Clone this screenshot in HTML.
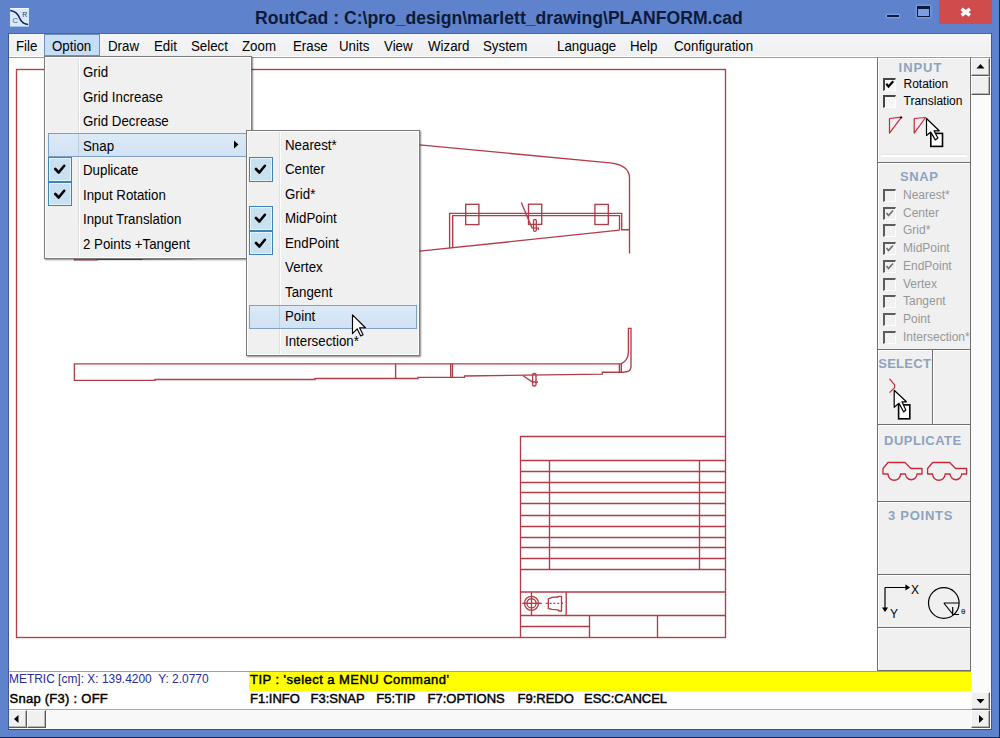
<!DOCTYPE html>
<html><head><meta charset="utf-8">
<style>
*{margin:0;padding:0;box-sizing:border-box}
html,body{width:1000px;height:738px;overflow:hidden;background:#5e82cc;font-family:"Liberation Sans",sans-serif}
.a{position:absolute}
.t{position:absolute;white-space:pre;line-height:1}
#title{left:0;top:0;width:1000px;height:34px;background:#5e82cc}
#menubar{left:8px;top:33px;width:983px;height:25px;background:linear-gradient(#f4f5f8,#f0f0f0);border-top:1px solid #4b679c;border-bottom:1px solid #9c9c9c;box-shadow:inset 0 -1px 0 #fff}
.mb{font-size:14px;color:#000;top:38.5px;transform-origin:0 0;transform:scaleX(0.95)}
#canvas{left:8px;top:58px;width:869px;height:613px;background:#fff}
#panel{left:877px;top:58px;width:94px;height:613px;background:#f0f0f0;border-left:1px solid #707070}
#vscroll{left:971px;top:58px;width:20px;height:652px;background:#fbfbfb}
#status{left:8px;top:671px;width:963px;height:39px;background:#fff;border-top:1px solid #a0a0a0}
#hscroll{left:8px;top:709px;width:983px;height:20px;background:#f8f8f8;border-top:1px solid #a8a8a8}
.menu{background:#f0f0f0;border:1px solid #7a7a7a;box-shadow:inset 1px 1px 0 #fff,inset -1px -1px 0 #fff,1px 1px 1.5px rgba(0,0,0,0.45)}
.mi{font-size:14px;color:#000;transform-origin:0 0;transform:scaleX(0.95)}
.chk{position:absolute;background:#c9e0f1;border:1px solid #3f82b8;box-shadow:inset 0 0 0 1px #e2f4fc}
.hl{position:absolute;background:linear-gradient(#dce9f7,#d0e2f4);border:1px solid #7f9fc4}
.pbox{position:absolute;border-right:1px solid #6e6e6e;border-bottom:1px solid #6e6e6e;box-shadow:inset 1px 1px 0 #fff;background:#f0f0f0}
.ph{font-size:13px;font-weight:bold;color:#8ea3bf}
.pt{font-size:12px;color:#000}
.pg{font-size:12px;color:#979797}
.cb{position:absolute;width:13px;height:13px;border-top:2px solid #444;border-left:2px solid #444;border-right:1px solid #fff;border-bottom:1px solid #fff;background:#f6f6f6}
.cbg{position:absolute;width:13px;height:13px;border-top:2px solid #5c5c5c;border-left:2px solid #5c5c5c;border-right:1px solid #fff;border-bottom:1px solid #fff;background:#f0f0f0}
.sb{font-size:13px;font-weight:normal;color:#000;-webkit-text-stroke:0.45px #000}
.sbtn{position:absolute;background:#f0f0f0;border:1px solid;border-color:#fcfcfc #5a5a5a #5a5a5a #fcfcfc;box-shadow:inset -1px -1px 0 #b4b4b4}
</style></head><body>
<!-- title bar -->
<div class="a" id="title"></div>
<svg class="a" style="left:10px;top:8px" width="19" height="19" viewBox="0 0 19 19">
 <rect x="0" y="0" width="19" height="18.6" fill="#d6eafa"/>
 <path d="M0.3 0.5 H18.7" stroke="#f4fcff" stroke-width="1"/>
 <path d="M0.2 2.4 C5 3, 8 5.5, 9.8 10.5 C11.3 14.5, 13.5 16, 18.2 16.6" stroke="#101e5e" stroke-width="1.5" fill="none"/>
 <text x="12.2" y="8.8" font-size="7" fill="#2a3a78" font-family="Liberation Sans">R</text>
 <text x="2.6" y="15" font-size="7.5" fill="#4a5e88" font-family="Liberation Sans">C</text>
</svg>
<div class="t" style="left:255px;top:9.8px;font-size:17.6px;font-weight:bold;color:#0d1a38">RoutCad : C:\pro_design\marlett_drawing\PLANFORM.cad</div>
<div class="a" style="left:887px;top:14.7px;width:12px;height:2.5px;background:#0d1a40;box-shadow:0 0 2px 1px rgba(190,210,255,0.45)"></div>
<div class="a" style="left:917.2px;top:6px;width:13px;height:10.8px;border:1.5px solid #0d1a40;border-top-width:3px;background:#7c9ede;box-shadow:0 0 2px 1px rgba(190,210,255,0.4)"></div>
<div class="a" style="left:939px;top:0px;width:52.5px;height:23.5px;background:#d04c4c"></div>
<svg class="a" style="left:958px;top:6px" width="16" height="13" viewBox="0 0 16 13"><path d="M3.6 2.9 L11.9 9.4 M11.9 2.9 L3.6 9.4" stroke="#fff" stroke-width="3.3"/></svg>

<!-- menubar -->
<div class="a" id="menubar"></div>
<div class="a" style="left:44px;top:34px;width:56px;height:22px;background:#c5ddf6;border:1px solid #7090b8"></div>
<div class="t mb" style="left:16px">File</div>
<div class="t mb" style="left:52px">Option</div>
<div class="t mb" style="left:108px">Draw</div>
<div class="t mb" style="left:154px">Edit</div>
<div class="t mb" style="left:191px">Select</div>
<div class="t mb" style="left:242px">Zoom</div>
<div class="t mb" style="left:293px">Erase</div>
<div class="t mb" style="left:339px">Units</div>
<div class="t mb" style="left:384px">View</div>
<div class="t mb" style="left:428px">Wizard</div>
<div class="t mb" style="left:483px">System</div>
<div class="t mb" style="left:557px">Language</div>
<div class="t mb" style="left:630px">Help</div>
<div class="t mb" style="left:674px">Configuration</div>

<!-- canvas -->
<div class="a" id="canvas"></div>
<svg class="a" style="left:0;top:0" width="1000" height="738" viewBox="0 0 1000 738">
 <g stroke="#b23c48" stroke-width="1.35" fill="none">
  <rect x="16.5" y="69.5" width="709" height="568"/>
  <!-- top section -->
  <path d="M74.5 200 L74.5 259.8 L97 259.8 L97 259.2 L142 259.2 L142 258.8 L190 258.6 L246 256.5 L419.6 251.2 L619.5 230.2"/>
  <path d="M300 133 L419.6 144.9 L610 162.9 Q629.5 165 629.5 178 L629.5 253.6"/>
  <path d="M449.6 248 L449.6 213.3 L621.7 213.3 L621.7 229.7 L629.5 229.7"/>
  <path d="M452.7 247.7 L452.7 215.6 L619.5 215.6 L619.5 230.2"/>
  <rect x="465.7" y="204.3" width="13.2" height="20.3"/>
  <rect x="528.5" y="204.2" width="13.2" height="20.2"/>
  <rect x="594.9" y="204.4" width="13.4" height="20.1"/>
  <path d="M521.3 202.6 L532 227.9 L538.4 228.2 L538.4 230"/>
  <rect x="533.5" y="219.4" width="2.8" height="12" rx="1.4"/>
  <!-- lower section -->
  <path d="M74.4 363.8 L621.3 363.8 Q628.4 360 628.4 352 L628.4 328.3 L631 328.3 L631 367.4 Q630 371.7 626.5 371.7 L623.7 372.2 L602.3 372.2 L602.3 374.1 L464.5 376 L464.5 377.4 L418 377.4 L418 378.5 L315 378.5 L315 379.5 L155 379.5 L155 380.4 L74.4 380.4 Z"/>
  <path d="M395.6 363.8 V378.5 M450.7 363.8 V377.4 M452.5 363.8 V377.4 M619.4 363.8 V372.2 M621.3 363.8 V372.2"/>
  <path d="M522.8 375.5 L532.4 382 L538 382"/>
  <rect x="532.6" y="373.5" width="3.4" height="12.5" rx="1.5"/>
  <!-- title block -->
  <path d="M520.5 637.5 V436.5 H725.5"/>
  <path d="M520.5 460.5 H725.5"/><path d="M520.5 471.5 H725.5"/><path d="M520.5 482.5 H725.5"/><path d="M520.5 492.5 H725.5"/><path d="M520.5 503.5 H725.5"/><path d="M520.5 515.5 H725.5"/><path d="M520.5 526.5 H725.5"/><path d="M520.5 537.5 H725.5"/><path d="M520.5 547.5 H725.5"/><path d="M520.5 558.5 H725.5"/><path d="M520.5 569.5 H725.5"/>
  <path d="M549.5 460.5 V569.5 M699.5 460.5 V569.5"/>
  <path d="M520.5 592 H725.5 M520.5 615.5 H725.5 M520.5 626.5 H589.5"/>
  <path d="M566.2 592 V615.5 M531.5 592 V615.5 M589.5 615.5 V637.5 M657.5 615.5 V637.5"/>
  <circle cx="531.5" cy="603.3" r="7"/>
  <circle cx="531.5" cy="603.3" r="4.6"/>
  <path d="M522.3 603.3 H541.8"/>
  <path d="M548.3 598.8 L552 597.3 L558 597 L559 596.3 L561.5 596.3 L561.5 611 L559 611 L558 609.8 L552 609.3 L548.3 608.5 Z"/>
  <path d="M545.8 603.3 H564.5" stroke-dasharray="2 1.8"/>
 </g>
</svg>

<!-- panel -->
<div class="a" id="panel"></div>
<div class="a" id="vscroll"></div>
<div class="a" id="status"></div>
<div class="a" id="hscroll"></div>

<!-- right panel boxes -->
<div class="pbox" style="left:878px;top:58px;width:93px;height:105px"></div>
<div class="a" style="left:881px;top:154px;width:86px;height:1px;background:#e2e2e2"></div><div class="a" style="left:881px;top:155px;width:86px;height:2px;background:#fff"></div>
<div class="t ph" style="left:898.6px;top:60.5px;letter-spacing:0.95px">INPUT</div>
<div class="cb" style="left:883px;top:77.5px"></div>
<svg class="a" style="left:883px;top:77.5px" width="13" height="13"><path d="M3.3 5.8 L5.5 8.6 L10.2 3.3" stroke="#000" stroke-width="2.2" fill="none"/></svg>
<div class="t pt" style="left:903.5px;top:77.8px">Rotation</div>
<div class="cb" style="left:883px;top:95px"></div>
<div class="t pt" style="left:903.5px;top:95px">Translation</div>
<svg class="a" style="left:880px;top:110px" width="70" height="42" viewBox="0 0 70 42">
 <path d="M9.5 23.1 L9.5 8.5 L21.5 7.2 Z" stroke="#c8283c" stroke-width="1.2" fill="none" stroke-linejoin="round"/>
 <circle cx="21.2" cy="7.5" r="1.1" fill="#000"/>
 <path d="M34.2 23.1 L34.2 8.5 L45.6 7.5 Z" stroke="#c8283c" stroke-width="1.2" fill="none" stroke-linejoin="round"/>
 <rect x="50.8" y="23.4" width="11.7" height="13" fill="#fff" stroke="#000" stroke-width="1.6"/>
 <path d="M46.5 8.5 L46.5 25.4 L50.8 22.1 L55.3 29.9 L57.9 28 L54 20.8 L59.2 20.8 Z" fill="#fff" stroke="#000" stroke-width="1.2" stroke-linejoin="round"/>
</svg>

<div class="pbox" style="left:878px;top:163px;width:93px;height:187px"></div>
<div class="t ph" style="left:899.9px;top:170px;letter-spacing:0.67px">SNAP</div>
<div class="cbg" style="left:882.5px;top:189.0px"></div>
<div class="t pg" style="left:903px;top:189.0px">Nearest*</div>
<div class="cbg" style="left:882.5px;top:206.7px"></div>
<svg class="a" style="left:882.5px;top:206.7px" width="13" height="13"><path d="M3.5 6 L5.5 8.5 L10 3.5" stroke="#6e6e6e" stroke-width="1.6" fill="none"/></svg>
<div class="t pg" style="left:903px;top:206.7px">Center</div>
<div class="cbg" style="left:882.5px;top:224.4px"></div>
<div class="t pg" style="left:903px;top:224.4px">Grid*</div>
<div class="cbg" style="left:882.5px;top:242.1px"></div>
<svg class="a" style="left:882.5px;top:242.1px" width="13" height="13"><path d="M3.5 6 L5.5 8.5 L10 3.5" stroke="#6e6e6e" stroke-width="1.6" fill="none"/></svg>
<div class="t pg" style="left:903px;top:242.1px">MidPoint</div>
<div class="cbg" style="left:882.5px;top:259.8px"></div>
<svg class="a" style="left:882.5px;top:259.8px" width="13" height="13"><path d="M3.5 6 L5.5 8.5 L10 3.5" stroke="#6e6e6e" stroke-width="1.6" fill="none"/></svg>
<div class="t pg" style="left:903px;top:259.8px">EndPoint</div>
<div class="cbg" style="left:882.5px;top:277.5px"></div>
<div class="t pg" style="left:903px;top:277.5px">Vertex</div>
<div class="cbg" style="left:882.5px;top:295.2px"></div>
<div class="t pg" style="left:903px;top:295.2px">Tangent</div>
<div class="cbg" style="left:882.5px;top:312.9px"></div>
<div class="t pg" style="left:903px;top:312.9px">Point</div>
<div class="cbg" style="left:882.5px;top:330.6px"></div>
<div class="t pg" style="left:903px;top:330.6px">Intersection*</div>

<div class="pbox" style="left:878px;top:350px;width:55px;height:75px"></div>
<div class="pbox" style="left:933px;top:350px;width:38px;height:75px"></div>
<div class="t ph" style="left:878.2px;top:356.5px;letter-spacing:0.28px">SELECT</div>
<svg class="a" style="left:880px;top:372px" width="40" height="50" viewBox="0 0 40 50">
 <path d="M9.5 6.8 L14.6 12.9 L14.6 15.6 L9.5 20.7" stroke="#c8283c" stroke-width="1.2" fill="none" stroke-linejoin="round"/>
 <rect x="18.6" y="32.9" width="11.2" height="13.9" fill="#fff" stroke="#000" stroke-width="1.6"/>
 <path d="M14.2 18.3 L14.2 35.3 L19 31.2 L23.7 40 L25.8 38 L22 29.8 L26.4 29.8 Z" fill="#fff" stroke="#000" stroke-width="1.2" stroke-linejoin="round"/>
</svg>

<div class="pbox" style="left:878px;top:425px;width:93px;height:77px"></div>
<div class="t ph" style="left:884.1px;top:433.5px;letter-spacing:0.45px">DUPLICATE</div>
<svg class="a" style="left:0;top:0" width="1000" height="738" viewBox="0 0 1000 738">
 <g stroke="#c8283c" stroke-width="1.3" fill="none" stroke-linejoin="round">
 <path d="M883.0 468.5 L888.0 462.5 L905.0 462.5 L911.0 468.5 L922.0 468.5 L922.0 474 L917.0 474 A5.75 5.75 0 0 1 905.5 474 L900.5 474 A6.25 6.25 0 0 1 888.0 474 L883.0 474 Z"/>
 <path d="M927.6 468.5 L932.6 462.5 L949.6 462.5 L955.6 468.5 L966.6 468.5 L966.6 474 L961.6 474 A5.75 5.75 0 0 1 950.1 474 L945.1 474 A6.25 6.25 0 0 1 932.6 474 L927.6 474 Z"/>
 </g>
</svg>

<div class="pbox" style="left:878px;top:502px;width:93px;height:73px"></div>
<div class="t ph" style="left:888px;top:509px;letter-spacing:0.74px">3 POINTS</div>

<div class="pbox" style="left:878px;top:575px;width:93px;height:53px"></div>
<svg class="a" style="left:878px;top:575px" width="93" height="53" viewBox="0 0 93 53">
 <g stroke="#000" stroke-width="1.2" fill="none">
  <path d="M7 12.5 L28 12.5 M7 12.5 L7 34"/>
  <path d="M28 10.5 L31 12.5 L28 14.5Z" fill="#000"/>
  <path d="M5 33 L7 36 L9 33Z" fill="#000"/>
  <circle cx="65.8" cy="28" r="15.3"/>
  <path d="M65.8 28 L81 28 M65.8 28 L75 39.5 M74.7 32 L74.7 39.5 L81 39.5"/>
 </g>
 <text x="33" y="18.5" font-size="12" font-family="Liberation Sans" fill="#000">X</text>
 <text x="12" y="43" font-size="12" font-family="Liberation Sans" fill="#000">Y</text>
 <text x="83" y="38.5" font-size="8" font-family="Liberation Sans" fill="#000">θ</text>
</svg>
<div class="pbox" style="left:878px;top:628px;width:93px;height:43px"></div>

<!-- scrollbars -->
<div class="sbtn" style="left:971px;top:57.5px;width:19px;height:18.5px"></div>
<svg class="a" style="left:971px;top:58px" width="19" height="18"><path d="M5.5 10.5 L13.5 10.5 L9.5 6Z" fill="#000"/></svg>
<div class="sbtn" style="left:971px;top:76px;width:19px;height:19px"></div>
<div class="sbtn" style="left:971px;top:691.5px;width:19px;height:18.5px"></div>
<svg class="a" style="left:971px;top:692px" width="19" height="18"><path d="M5.5 7 L13.5 7 L9.5 11.5Z" fill="#000"/></svg>
<div class="sbtn" style="left:8px;top:710px;width:18.5px;height:18px"></div>
<svg class="a" style="left:8px;top:710px" width="19" height="18"><path d="M10.5 5 L10.5 13 L6 9Z" fill="#000"/></svg>
<div class="sbtn" style="left:27px;top:710px;width:18.5px;height:18px"></div>
<div class="sbtn" style="left:971px;top:710px;width:19px;height:18px"></div>
<svg class="a" style="left:971px;top:710px" width="19" height="18"><path d="M8 5 L8 13 L12.5 9Z" fill="#000"/></svg>
<!-- status -->
<div class="a" style="left:248.5px;top:672px;width:722px;height:18.5px;background:#ffff00"></div>
<div class="t" style="left:9px;top:672px;font-size:13px;color:#2a2a9c;transform-origin:0 0;transform:scaleX(0.919)">METRIC [cm]: X: 139.4200  Y: 2.0770</div>
<div class="t sb" style="left:9.5px;top:692px;letter-spacing:0.26px">Snap (F3) : OFF</div>
<div class="t sb" style="left:250px;top:672.6px;letter-spacing:0.46px">TIP : 'select a MENU Command'</div>
<div class="t sb" style="left:250px;top:691.5px">F1:INFO</div>
<div class="t sb" style="left:310.5px;top:691.5px">F3:SNAP</div>
<div class="t sb" style="left:376.3px;top:691.5px">F5:TIP</div>
<div class="t sb" style="left:427.5px;top:691.5px">F7:OPTIONS</div>
<div class="t sb" style="left:517.5px;top:691.5px">F9:REDO</div>
<div class="t sb" style="left:584px;top:691.5px">ESC:CANCEL</div>

<!-- main menu -->
<div class="a menu" style="left:44px;top:56px;width:208px;height:203px"></div>
<div class="a" style="left:77.5px;top:58px;width:1px;height:198px;background:#e0e0e0"></div>
<div class="a" style="left:78.5px;top:58px;width:1px;height:198px;background:#fff"></div>
<div class="hl" style="left:47.5px;top:133px;width:204px;height:24px"></div>
<div class="a" style="left:77.5px;top:134px;width:1px;height:22px;background:#bccde0"></div>
<svg class="a" style="left:233px;top:140px" width="6" height="9"><path d="M1 0.5 L5.5 4.5 L1 8.5Z" fill="#000"/></svg>
<div class="chk" style="left:47.5px;top:157.0px;width:24.5px;height:24.5px"></div>
<svg class="a" style="left:47.5px;top:157.0px" width="25" height="25"><path d="M7.3 12 L10.7 15.5 L16.2 8.8" stroke="#000" stroke-width="2.6" fill="none" stroke-linecap="round" stroke-linejoin="round"/></svg>
<div class="chk" style="left:47.5px;top:181.5px;width:24.5px;height:24.5px"></div>
<svg class="a" style="left:47.5px;top:181.5px" width="25" height="25"><path d="M7.3 12 L10.7 15.5 L16.2 8.8" stroke="#000" stroke-width="2.6" fill="none" stroke-linecap="round" stroke-linejoin="round"/></svg>
<div class="t mi" style="left:83px;top:65.0px">Grid</div>
<div class="t mi" style="left:83px;top:89.5px">Grid Increase</div>
<div class="t mi" style="left:83px;top:114.0px">Grid Decrease</div>
<div class="t mi" style="left:83px;top:138.5px">Snap</div>
<div class="t mi" style="left:83px;top:163.0px">Duplicate</div>
<div class="t mi" style="left:83px;top:187.5px">Input Rotation</div>
<div class="t mi" style="left:83px;top:212.0px">Input Translation</div>
<div class="t mi" style="left:83px;top:236.5px">2 Points +Tangent</div>
<!-- sub menu -->
<div class="a menu" style="left:246px;top:130px;width:174px;height:226px"></div>
<div class="a" style="left:278.5px;top:132px;width:1px;height:222px;background:#e0e0e0"></div>
<div class="a" style="left:279.5px;top:132px;width:1px;height:222px;background:#fff"></div>
<div class="hl" style="left:249px;top:304.5px;width:167.5px;height:24px"></div>
<div class="a" style="left:278.5px;top:305.5px;width:1px;height:22px;background:#bccde0"></div>
<div class="chk" style="left:249px;top:157.4px;width:24px;height:24.5px"></div>
<svg class="a" style="left:249px;top:157.4px" width="25" height="25"><path d="M7 12 L10.4 15.5 L15.9 8.8" stroke="#000" stroke-width="2.6" fill="none" stroke-linecap="round" stroke-linejoin="round"/></svg>
<div class="chk" style="left:249px;top:206.4px;width:24px;height:24.5px"></div>
<svg class="a" style="left:249px;top:206.4px" width="25" height="25"><path d="M7 12 L10.4 15.5 L15.9 8.8" stroke="#000" stroke-width="2.6" fill="none" stroke-linecap="round" stroke-linejoin="round"/></svg>
<div class="chk" style="left:249px;top:230.9px;width:24px;height:24.5px"></div>
<svg class="a" style="left:249px;top:230.9px" width="25" height="25"><path d="M7 12 L10.4 15.5 L15.9 8.8" stroke="#000" stroke-width="2.6" fill="none" stroke-linecap="round" stroke-linejoin="round"/></svg>
<div class="t mi" style="left:285px;top:137.9px">Nearest*</div>
<div class="t mi" style="left:285px;top:162.4px">Center</div>
<div class="t mi" style="left:285px;top:186.9px">Grid*</div>
<div class="t mi" style="left:285px;top:211.4px">MidPoint</div>
<div class="t mi" style="left:285px;top:235.9px">EndPoint</div>
<div class="t mi" style="left:285px;top:260.4px">Vertex</div>
<div class="t mi" style="left:285px;top:284.9px">Tangent</div>
<div class="t mi" style="left:285px;top:309.4px">Point</div>
<div class="t mi" style="left:285px;top:333.9px">Intersection*</div>
<svg class="a" style="left:351px;top:314px" width="17" height="25" viewBox="0 0 17 25"><path d="M1.50 0.80 L1.50 19.63 L6.21 14.92 L9.74 21.99 L12.09 20.81 L8.56 13.75 L14.45 13.75 Z" fill="#fff" stroke="#000" stroke-width="1.15" stroke-linejoin="round"/></svg>
<!-- window frame lines -->
<div class="a" style="left:8px;top:33px;width:1px;height:697px;background:#3f5a92"></div>
<div class="a" style="left:991px;top:33px;width:1px;height:697px;background:#3f5a92"></div>
<div class="a" style="left:8px;top:729px;width:984px;height:1px;background:#34508c"></div>
<div class="a" style="left:0;top:737px;width:1000px;height:1px;background:#15285c"></div>
<div class="a" style="left:999px;top:0;width:1px;height:738px;background:#15285c"></div>
</body></html>
